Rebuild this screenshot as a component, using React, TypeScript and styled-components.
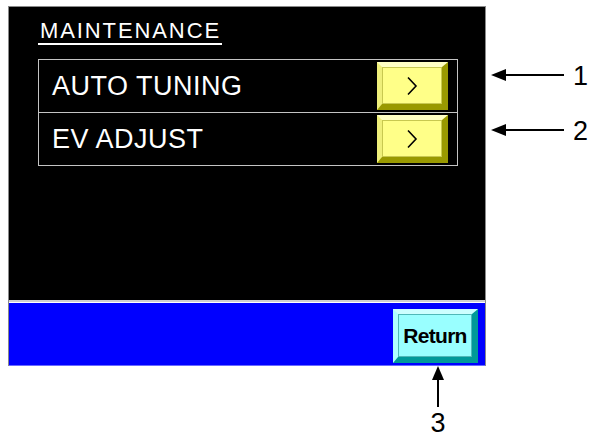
import styled, { createGlobalStyle } from "styled-components";

const GlobalStyle = createGlobalStyle`
  html, body {
    margin: 0;
    padding: 0;
    background: #ffffff;
    font-family: "Liberation Sans", Arial, sans-serif;
  }
`;

const Page = styled.div`
  display: grid;
  grid-template-columns: 478px auto;
  padding: 6px 0 0 8px;
  width: 591px;
  height: 437px;
  box-sizing: border-box;
`;

const Screen = styled.div`
  display: flex;
  flex-direction: column;
  width: 478px;
  box-sizing: border-box;
  border: 1px solid #8a8a8a;
  border-bottom: none;
`;

const Panel = styled.div`
  height: 293px;
  background: #000000;
  padding: 13px 0 0 29px;
  box-sizing: border-box;
`;

const Heading = styled.div`
  display: inline-block;
  color: #ffffff;
  font-size: 22px;
  line-height: 21px;
  letter-spacing: 1.9px;
  padding: 0 1px 2px 2px;
  border-bottom: 2px solid #ffffff;
`;

const MenuList = styled.div`
  width: 420px;
  margin-top: 14px;
  border: 1px solid #c4c4c4;
  box-sizing: border-box;
`;

const MenuRow = styled.div<{ $last?: boolean }>`
  display: flex;
  align-items: center;
  justify-content: space-between;
  height: 52px;
  padding: 0 9px 0 13px;
  border-bottom: ${(p) => (p.$last ? "none" : "1px solid #c4c4c4")};
  color: #ffffff;
  font-size: 27px;
  letter-spacing: 0.5px;
`;

const BevelButton = styled.div<{ $tone: "yellow" | "cyan" }>`
  display: flex;
  align-items: center;
  justify-content: center;
  box-sizing: border-box;
  border-style: solid;
  border-width: 5px 6px 6px 5px;
  border-color: ${(p) =>
    p.$tone === "yellow"
      ? "#ffffc4 #999900 #999900 #efef7a"
      : "#ccffff #009999 #009999 #b0ffff"};
  background: ${(p) => (p.$tone === "yellow" ? "#ffff88" : "#99ffff")};
  box-shadow: inset 0 0 0 1px
    ${(p) => (p.$tone === "yellow" ? "#c8c850" : "#4fb8b8")};
`;

const NextButton = styled(BevelButton)`
  width: 71px;
  height: 48px;
`;

const ReturnButton = styled(BevelButton)`
  width: 85px;
  height: 54px;
  font-size: 21px;
  font-weight: bold;
  letter-spacing: -0.7px;
  color: #000000;
  padding-top: 1px;
`;

const Divider = styled.div`
  height: 3px;
  border-top: 2px solid #cfcfcf;
  box-sizing: border-box;
  background: #ffffff;
`;

const Footer = styled.div`
  display: flex;
  justify-content: flex-end;
  height: 63px;
  padding: 6px 7px 0 0;
  box-sizing: border-box;
  background: #0000ff;
  border-bottom: 1px solid #6a6aff;
`;

const Callouts = styled.div`
  display: flex;
  flex-direction: column;
  gap: 23px;
  padding-top: 53px;
`;

const Callout = styled.div`
  display: flex;
  align-items: center;
  gap: 9px;
  height: 32px;
  padding-left: 5px;
`;

const CalloutLabel = styled.span`
  font-size: 27px;
  line-height: 27px;
  color: #000000;
  padding-top: 3px;
`;

const BottomCallout = styled.div`
  display: flex;
  flex-direction: column;
  align-items: center;
  width: 30px;
  margin-left: 415px;
`;

const Chevron = () => (
  <svg width="12" height="20" viewBox="0 0 12 20">
    <polyline
      points="2,1.5 10,10 2,18.5"
      fill="none"
      stroke="#000"
      strokeWidth="1.6"
    />
  </svg>
);

const LeftArrow = () => (
  <svg width="73" height="14" viewBox="0 0 73 14">
    <line x1="10" y1="7" x2="73" y2="7" stroke="#000" strokeWidth="2" />
    <polygon points="0,7 15,1 15,13" fill="#000" />
  </svg>
);

const UpArrow = () => (
  <svg width="14" height="41" viewBox="0 0 14 41">
    <line x1="7" y1="10" x2="7" y2="41" stroke="#000" strokeWidth="2" />
    <polygon points="7,0 1,14 13,14" fill="#000" />
  </svg>
);

const items = ["AUTO TUNING", "EV ADJUST"];

export default function App() {
  return (
    <>
      <GlobalStyle />
      <Page>
        <Screen>
          <Panel>
            <Heading>MAINTENANCE</Heading>
            <MenuList>
              {items.map((item, i) => (
                <MenuRow key={item} $last={i === items.length - 1}>
                  <span>{item}</span>
                  <NextButton $tone="yellow">
                    <Chevron />
                  </NextButton>
                </MenuRow>
              ))}
            </MenuList>
          </Panel>
          <Divider />
          <Footer>
            <ReturnButton $tone="cyan">Return</ReturnButton>
          </Footer>
        </Screen>
        <Callouts>
          {["1", "2"].map((n) => (
            <Callout key={n}>
              <LeftArrow />
              <CalloutLabel>{n}</CalloutLabel>
            </Callout>
          ))}
        </Callouts>
        <BottomCallout>
          <UpArrow />
          <CalloutLabel>3</CalloutLabel>
        </BottomCallout>
      </Page>
    </>
  );
}
